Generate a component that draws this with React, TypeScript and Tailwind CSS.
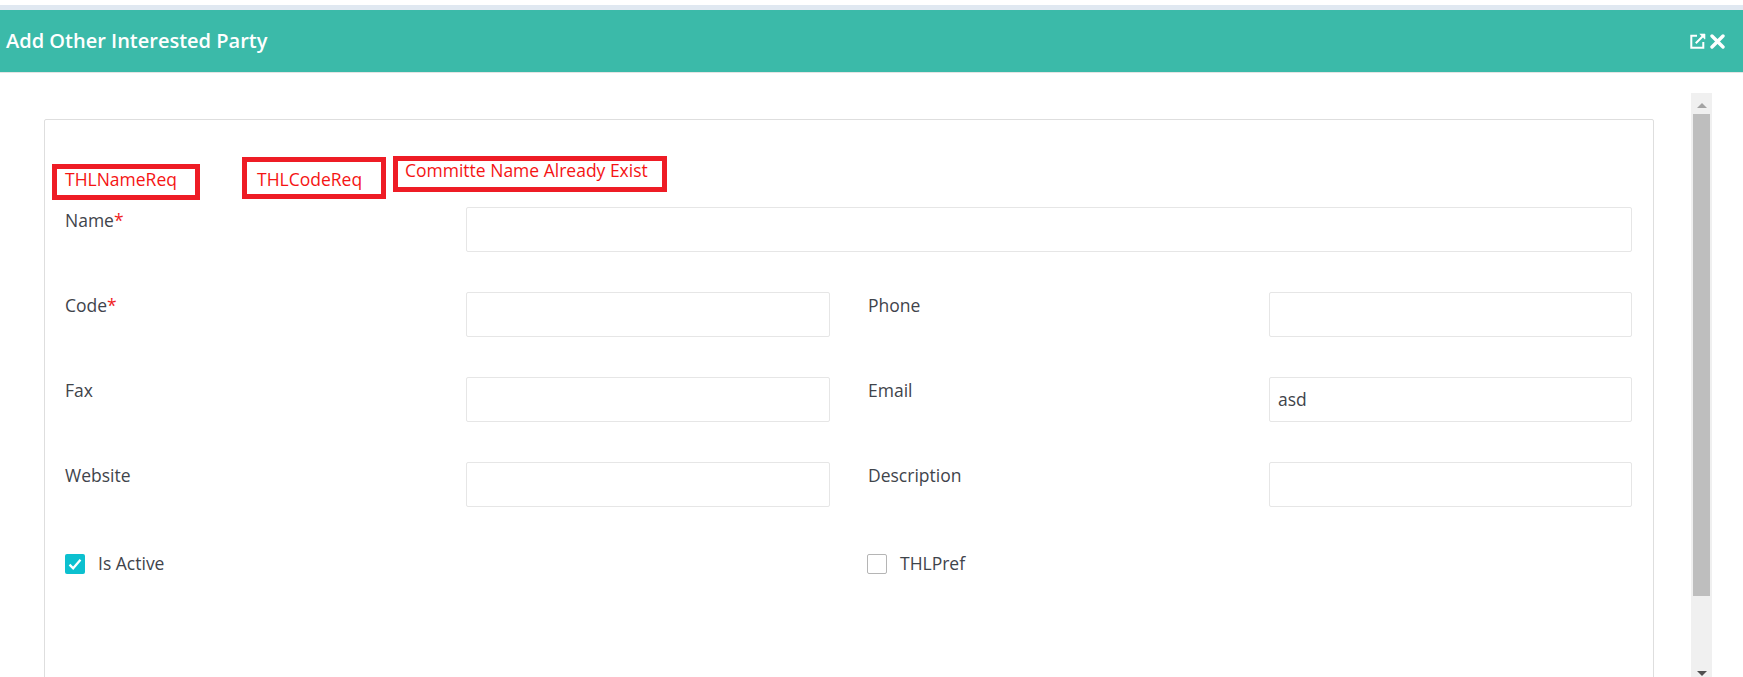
import React from "react"

const Field = ({ label, req, value, className }: { label: string; req?: boolean; value?: string; className: string }) => (
  <div className={"flex " + className}>
    <label className="w-[401px] shrink-0 text-[17.5px] leading-[26px] text-[#3f444b]">
      {label}
      {req && <span className="text-[#f01f1f]">*</span>}
    </label>
    <div className="h-[45px] flex-1 rounded-[2px] border border-[#e6e6e6] bg-white pl-2 text-[17.5px] leading-[43px] text-[#3f444b]">{value}</div>
  </div>
)

const ErrorBox = ({ text, className }: { text: string; className: string }) => (
  <div className={"shrink-0 border-[5px] border-[#ee1c25] text-[17.5px] text-[#f51414] " + className}>{text}</div>
)

const CheckRow = ({ label, checked }: { label: string; checked?: boolean }) => (
  <div className="flex w-[802px] shrink-0 items-center">
    {checked ? (
      <span className="mt-[2px] flex h-[20px] w-[20px] items-center justify-center rounded-[2px] bg-[#0cc0cf]">
        <svg width="16" height="16" viewBox="0 0 14 14" fill="none" stroke="#fff" strokeWidth="2">
          <path d="M2.2 7.5l3.2 3.2 6.4-7.4" />
        </svg>
      </span>
    ) : (
      <span className="mt-[2px] h-[20px] w-[20px] rounded-[2px] border border-[#b5b5b5] bg-white" />
    )}
    <span className="ml-[13px] text-[17.5px] text-[#3f444b]">{label}</span>
  </div>
)

export default function App() {
  return (
    <div className="h-[677px] overflow-hidden bg-white font-['Open_Sans',sans-serif]">
      <div className="mt-[5px] h-[5px] bg-[#e0e8f1]" />
      <div className="flex h-[63px] items-center justify-between border-b border-[#e4e4e4] bg-[#3bbaa9] pl-[6px] pr-[18px]">
        <h1 className="text-[20px] font-semibold text-white">Add Other Interested Party</h1>
        <div className="flex items-center gap-[4px]">
          <svg width="16" height="16" viewBox="0 0 16 16" fill="none" stroke="#fff" strokeWidth="2">
            <path d="M7 2.8H1.3v12h12V9" />
            <path d="M5.8 10.2L14 2" />
            <path d="M9.8 1h5.2v5.2z" fill="#fff" strokeWidth="0.6" />
          </svg>
          <svg width="15" height="15" viewBox="0 0 15 15" fill="none" stroke="#fff" strokeWidth="3.4" strokeLinecap="round">
            <path d="M2 2l11 11M13 2L2 13" />
          </svg>
        </div>
      </div>
      <div className="flex">
        <div className="ml-[44px] mt-[46px] h-[600px] w-[1610px] shrink-0 rounded-t-[2px] border border-[#dedede] pl-[7px]">
          <div className="flex h-[87px] items-start">
            <ErrorBox text="THLNameReq" className="mt-[44px] h-[36px] w-[148px] pl-[8px] leading-[20px]" />
            <ErrorBox text="THLCodeReq" className="ml-[42px] mt-[37px] h-[42px] w-[144px] pl-[10px] pt-[6px] leading-[22px]" />
            <ErrorBox text="Committe Name Already Exist" className="ml-[7px] mt-[36px] h-[36px] w-[274px] pl-[7px] leading-[18px]" />
          </div>
          <div className="ml-[13px] flex flex-col gap-[40px]">
            <Field label="Name" req className="w-[1567px]" />
            <div className="flex gap-[38px]">
              <Field label="Code" req className="w-[765px]" />
              <Field label="Phone" className="w-[764px]" />
            </div>
            <div className="flex gap-[38px]">
              <Field label="Fax" className="w-[765px]" />
              <Field label="Email" value="asd" className="w-[764px]" />
            </div>
            <div className="flex gap-[38px]">
              <Field label="Website" className="w-[765px]" />
              <Field label="Description" className="w-[764px]" />
            </div>
            <div className="mt-[3px] flex">
              <CheckRow label="Is Active" checked />
              <CheckRow label="THLPref" />
            </div>
          </div>
        </div>
        <div className="ml-[37px] mt-[20px] flex h-[584px] w-[21px] shrink-0 flex-col items-center bg-[#f0f0f0]">
          <div className="flex h-[21px] w-full items-center justify-center pt-[3px]">
            <span className="h-0 w-0 border-x-[5px] border-b-[5px] border-x-transparent border-b-[#a3a3a3]" />
          </div>
          <div className="h-[482px] w-[17px] bg-[#bebebe]" />
          <div className="mt-auto flex h-[8px] w-full items-center justify-center">
            <span className="h-0 w-0 border-x-[5px] border-t-[5px] border-x-transparent border-t-[#505050]" />
          </div>
        </div>
      </div>
    </div>
  )
}
